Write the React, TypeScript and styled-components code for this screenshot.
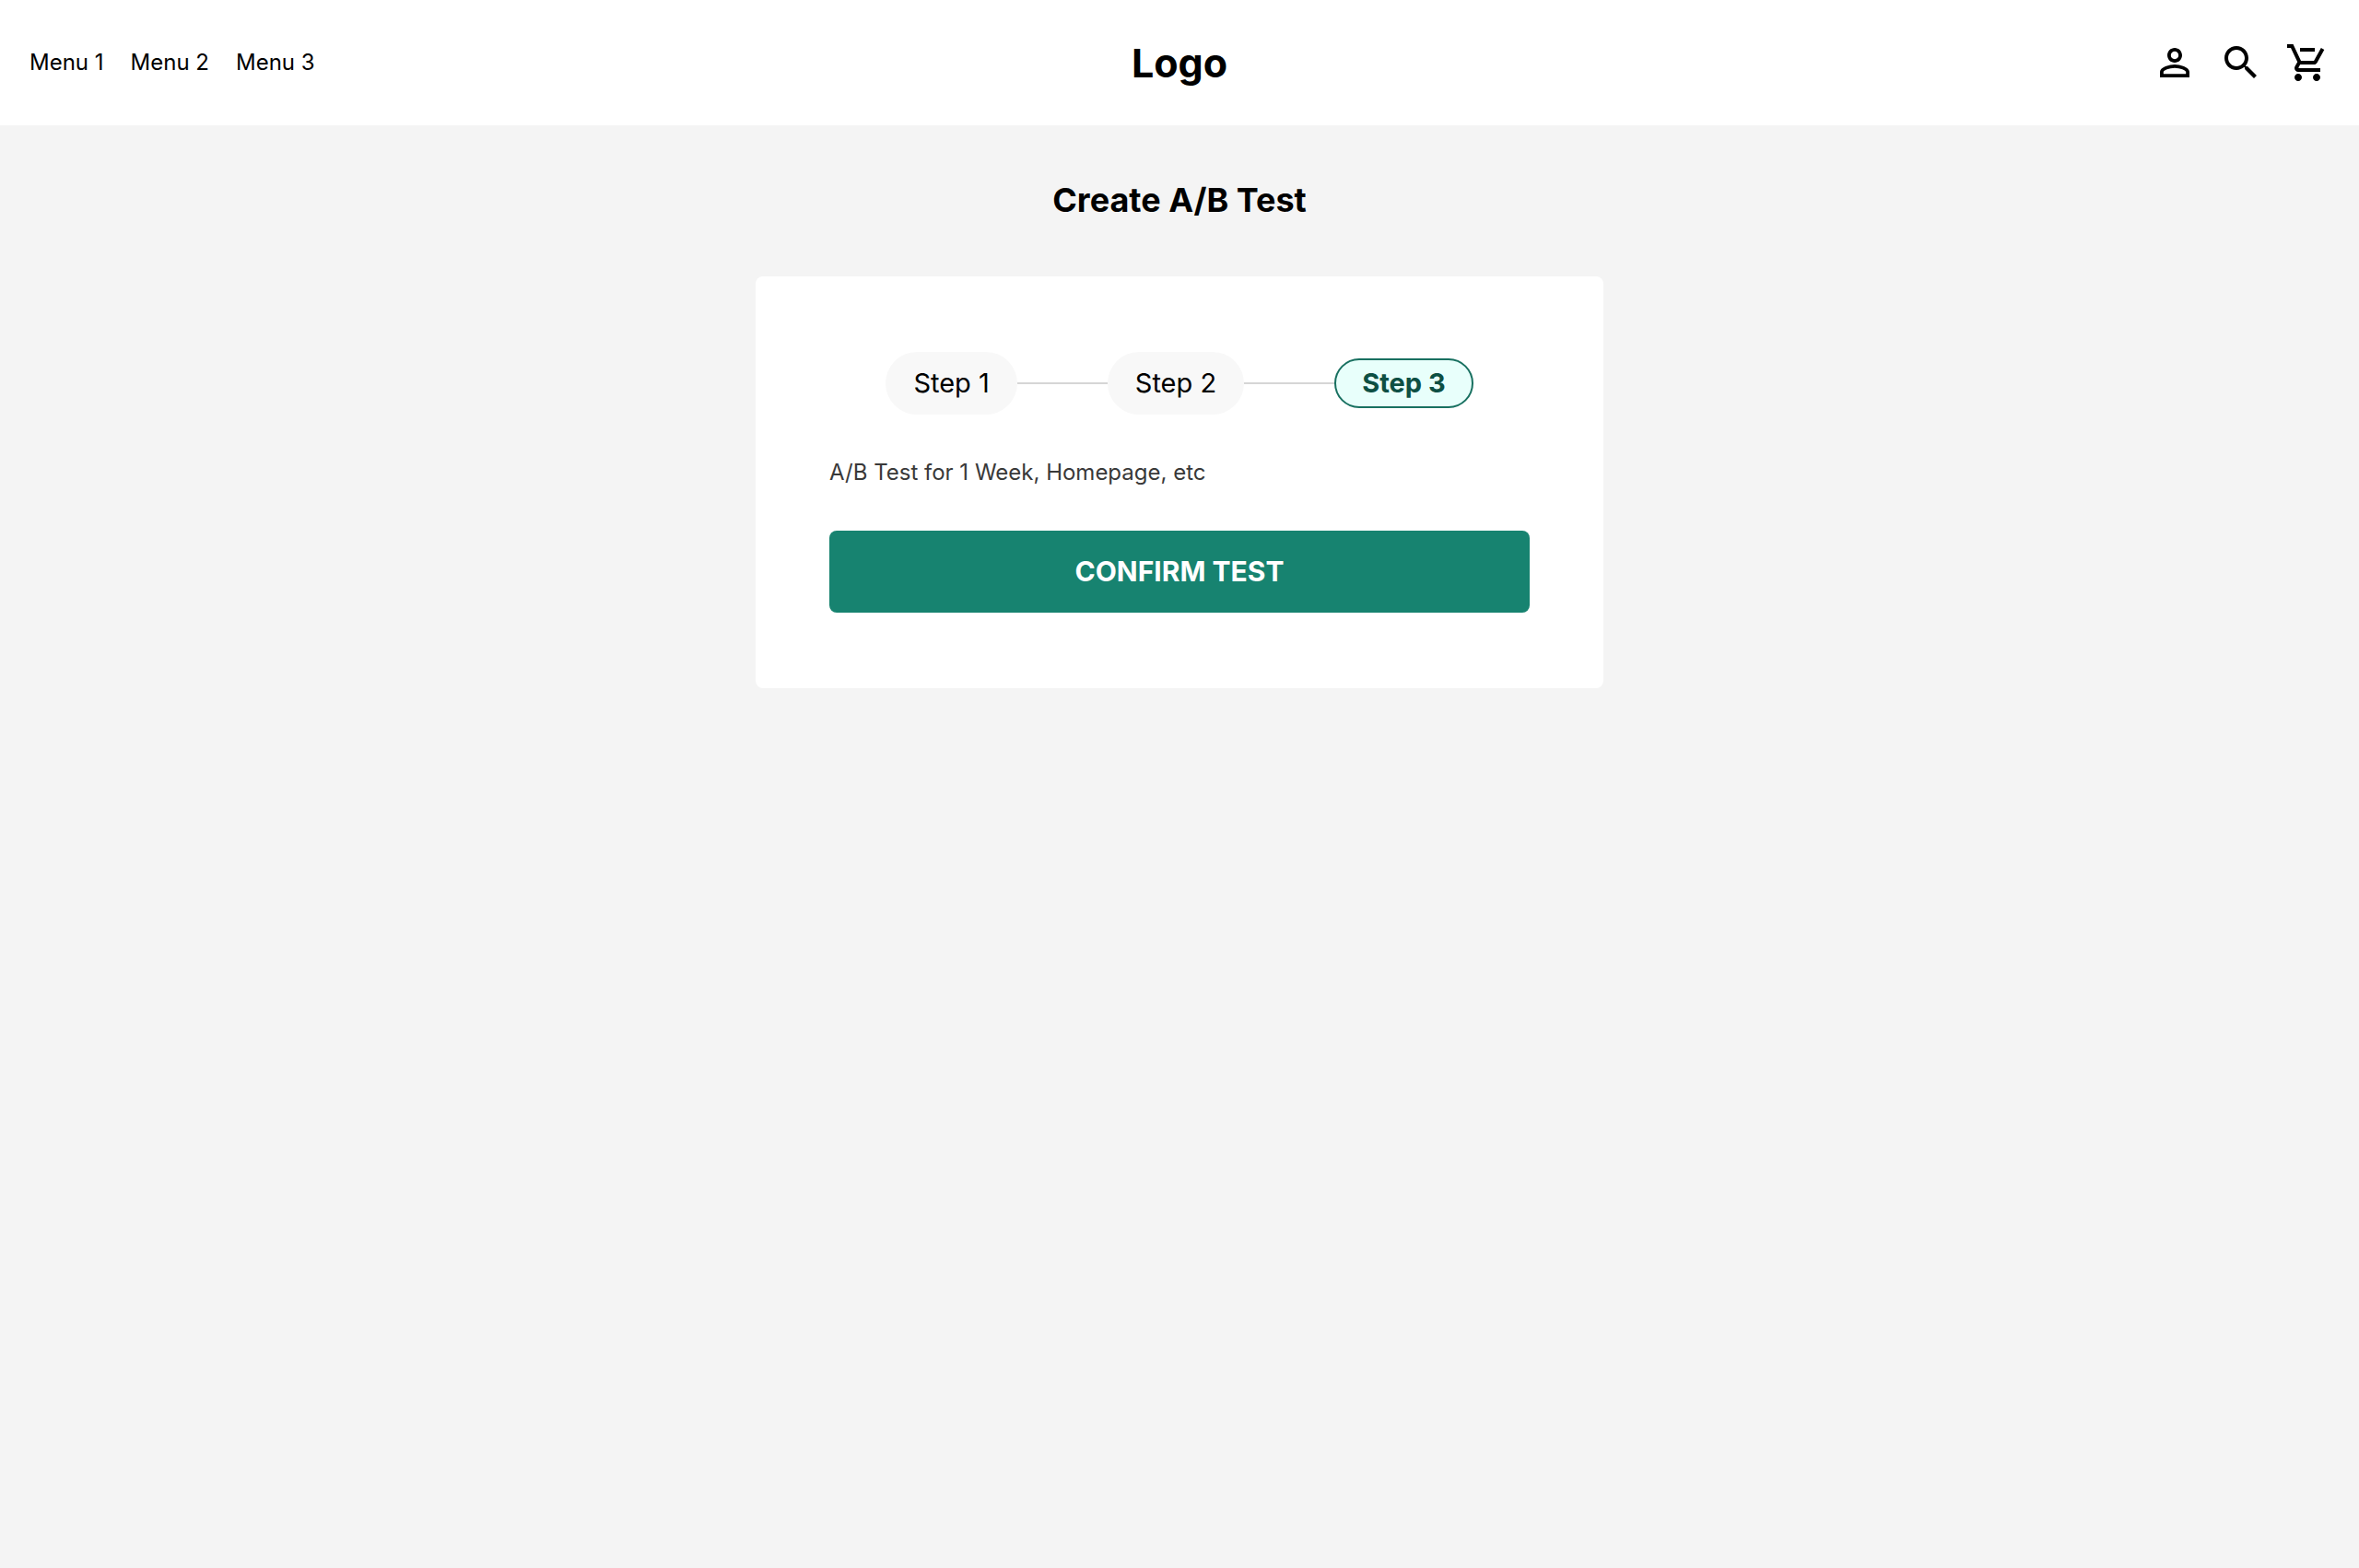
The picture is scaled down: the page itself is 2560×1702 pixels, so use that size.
import React from "react";
import styled, { createGlobalStyle } from "styled-components";

const GlobalStyle = createGlobalStyle`
  *, *::before, *::after { box-sizing: border-box; }
  body {
    margin: 0;
    background: #f4f4f4;
    color: #000;
    font-family: Inter, "Liberation Sans", sans-serif;
    font-size: 24px;
    line-height: 30px;
  }
`;

const Header = styled.header`
  display: grid;
  grid-template-columns: 1fr auto 1fr;
  align-items: center;
  padding: 40px 32px;
  background: #fff;
`;

const Menu = styled.nav`
  display: flex;
  gap: 29px;
`;

const MenuLink = styled.a`
  color: inherit;
  text-decoration: none;
`;

const Logo = styled.a`
  color: inherit;
  font-size: 43px;
  font-weight: 700;
  line-height: 56px;
  text-decoration: none;
`;

const Actions = styled.div`
  display: flex;
  justify-content: flex-end;
  gap: 24px;
`;

const IconButton = styled.button`
  display: flex;
  padding: 0;
  border: 0;
  background: none;
  color: inherit;
  cursor: pointer;
`;

const Main = styled.main`
  display: flex;
  flex-direction: column;
  align-items: center;
  gap: 62px;
  padding: 60px 32px;
`;

const Title = styled.h1`
  margin: 0;
  font-size: 36px;
  font-weight: 700;
  line-height: 42px;
`;

const Card = styled.section`
  display: flex;
  flex-direction: column;
  gap: 48px;
  width: 100%;
  max-width: 920px;
  padding: 82px 80px;
  border-radius: 8px;
  background: #fff;
`;

const Steps = styled.ol`
  display: flex;
  align-items: center;
  justify-content: center;
  margin: 0;
  padding: 0;
  list-style: none;
`;

const Step = styled.li`
  display: flex;
  align-items: center;

  & + &::before {
    content: "";
    width: 98px;
    height: 2px;
    background: #d6d6d6;
  }
`;

const StepPill = styled.span<{ $active?: boolean }>`
  padding: ${({ $active }) => ($active ? "8px 28px" : "16px 30px")};
  border: ${({ $active }) => ($active ? "2px solid #187060" : "0")};
  border-radius: 34px;
  background: ${({ $active }) => ($active ? "#e8fffb" : "#f8f8f8")};
  color: ${({ $active }) => ($active ? "#0d4f43" : "inherit")};
  font-size: 29px;
  font-weight: ${({ $active }) => ($active ? 700 : 400)};
  line-height: ${({ $active }) => ($active ? "34px" : "36px")};
`;

const Summary = styled.p`
  margin: 0;
  color: #393939;
`;

const ConfirmButton = styled.button`
  padding: 24px;
  border: 0;
  border-radius: 8px;
  background: #178370;
  color: #fff;
  font: inherit;
  font-size: 30px;
  font-weight: 700;
  line-height: 41px;
  cursor: pointer;
`;

const ICONS = {
  person:
    "M12 5.9c1.16 0 2.1.94 2.1 2.1s-.94 2.1-2.1 2.1S9.9 9.16 9.9 8s.94-2.1 2.1-2.1m0 9c2.97 0 6.1 1.46 6.1 2.1v1.1H5.9V17c0-.64 3.13-2.1 6.1-2.1M12 4C9.79 4 8 5.79 8 8s1.79 4 4 4 4-1.79 4-4-1.79-4-4-4zm0 9c-2.67 0-8 1.34-8 4v3h16v-3c0-2.66-5.33-4-8-4z",
  search:
    "M15.5 14h-.79l-.28-.27C15.41 12.59 16 11.11 16 9.5 16 5.91 13.09 3 9.5 3S3 5.91 3 9.5 5.91 16 9.5 16c1.61 0 3.09-.59 4.23-1.57l.27.28v.79l5 4.99L20.49 19l-4.99-5zm-6 0C7.01 14 5 11.99 5 9.5S7.01 5 9.5 5 14 7.01 14 9.5 11.99 14 9.5 14z",
  cart:
    "M8 4h8v2H8zM7 18c-1.1 0-1.99.9-1.99 2S5.9 22 7 22s2-.9 2-2-.9-2-2-2zm10 0c-1.1 0-1.99.9-1.99 2s.89 2 1.99 2 2-.9 2-2-.9-2-2-2zm-9.83-3.25l.03-.12.9-1.63h7.45c.75 0 1.41-.41 1.75-1.03l3.86-7.01L19.42 4h-.01l-1.1 2-2.76 5H8.53l-.13-.27L6.16 6l-.95-2-.94-2H1v2h2l3.6 7.59-1.35 2.45c-.16.28-.25.61-.25.96 0 1.1.9 2 2 2h12v-2H7.42c-.13 0-.25-.11-.25-.25z",
};

function Icon({ name }: { name: keyof typeof ICONS }) {
  return (
    <svg width="48" height="48" viewBox="0 0 24 24" fill="currentColor" aria-hidden="true">
      <path d={ICONS[name]} />
    </svg>
  );
}

const MENU = ["Menu 1", "Menu 2", "Menu 3"];
const STEPS = ["Step 1", "Step 2", "Step 3"];
const CURRENT_STEP = 2;

export default function App() {
  return (
    <>
      <GlobalStyle />
      <Header>
        <Menu>
          {MENU.map((label) => (
            <MenuLink key={label} href="#">{label}</MenuLink>
          ))}
        </Menu>
        <Logo href="#">Logo</Logo>
        <Actions>
          <IconButton type="button" aria-label="Account"><Icon name="person" /></IconButton>
          <IconButton type="button" aria-label="Search"><Icon name="search" /></IconButton>
          <IconButton type="button" aria-label="Cart"><Icon name="cart" /></IconButton>
        </Actions>
      </Header>
      <Main>
        <Title>Create A/B Test</Title>
        <Card>
          <Steps>
            {STEPS.map((label, i) => (
              <Step key={label} aria-current={i === CURRENT_STEP ? "step" : undefined}>
                <StepPill $active={i === CURRENT_STEP}>{label}</StepPill>
              </Step>
            ))}
          </Steps>
          <Summary>A/B Test for 1 Week, Homepage, etc</Summary>
          <ConfirmButton type="button">CONFIRM TEST</ConfirmButton>
        </Card>
      </Main>
    </>
  );
}
